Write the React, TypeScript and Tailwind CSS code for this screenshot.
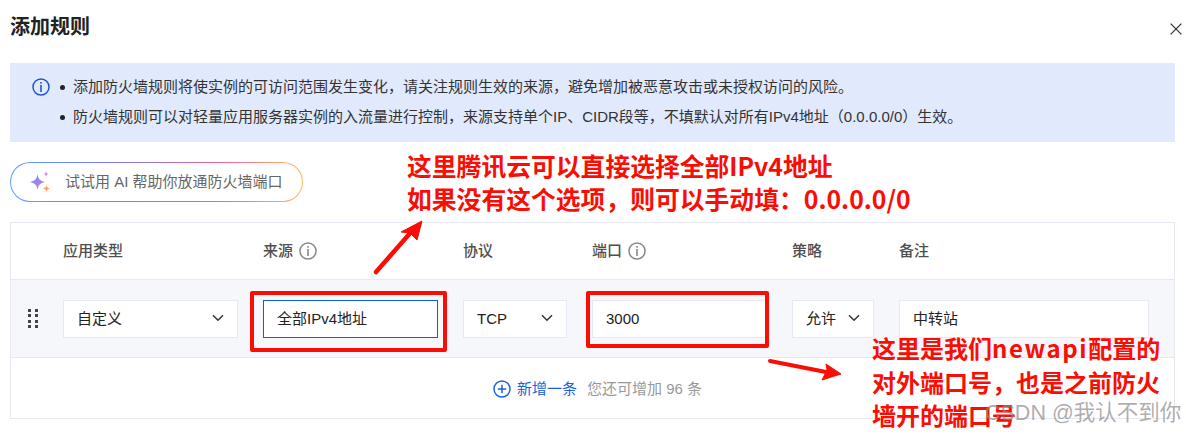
function Info({ className }: { className: string }) {
  return (
    <svg viewBox="0 0 18 18" className={className} fill="none" stroke="currentColor">
      <circle cx="9" cy="9" r="8" strokeWidth="1.5" />
      <rect x="8.2" y="4" width="1.6" height="1.7" fill="currentColor" stroke="none" />
      <rect x="8.2" y="7" width="1.6" height="7" fill="currentColor" stroke="none" />
    </svg>
  );
}

function Chevron() {
  return (
    <svg viewBox="0 0 12 8" className="-mt-[4px] h-2 w-3 text-[#333]" fill="none" stroke="currentColor" strokeWidth="1.5">
      <path d="M1 1.2 L6 6.2 L11 1.2" />
    </svg>
  );
}

function Select({ label, className }: { label: string; className: string }) {
  return (
    <div className={`flex h-[38px] items-center justify-between border border-[#e6e9f2] bg-white pl-[13px] pr-[13px] pt-[2px] ${className}`}>
      <span>{label}</span>
      <Chevron />
    </div>
  );
}

function Head({ label, info, className }: { label: string; info?: boolean; className: string }) {
  return (
    <div className={`flex items-center gap-[6px] ${className}`}>
      <span>{label}</span>
      {info && <Info className="h-[18px] w-[18px] text-[#888]" />}
    </div>
  );
}

export default function App() {
  return (
    <div className="relative h-[434px] w-[1186px] overflow-hidden bg-white font-['Liberation_Sans','Noto_Sans_CJK_SC',sans-serif] text-[#222]">
      <div className="relative px-[10px]">
        <h1 className="h-[63px] pt-[13px] text-[20px] font-bold leading-[28px] text-[#222]">添加规则</h1>
        <svg viewBox="0 0 12 12" className="absolute right-[4px] top-[23px] h-3 w-3 text-[#333]" fill="none" stroke="currentColor" strokeWidth="1.3">
          <path d="M0.6 0.6 L11.4 11.4 M11.4 0.6 L0.6 11.4" />
        </svg>

        <div className="flex h-[79px] w-[1165px] gap-[10px] bg-[#e1e9fd] pl-[22px] pt-[15px] text-[15px] leading-[30px] text-[#333]">
          <Info className="h-[18px] w-[18px] shrink-0 text-[#1f55d0]" />
          <ul className="-mt-[6px]">
            <li className="flex items-center gap-[8px]">
              <span className="h-[5px] w-[5px] rounded-full bg-[#222]" />
              <span>添加防火墙规则将使实例的可访问范围发生变化，请关注规则生效的来源，避免增加被恶意攻击或未授权访问的风险。</span>
            </li>
            <li className="flex items-center gap-[8px]">
              <span className="h-[5px] w-[5px] rounded-full bg-[#222]" />
              <span>防火墙规则可以对轻量应用服务器实例的入流量进行控制，来源支持单个IP、CIDR段等，不填默认对所有IPv4地址（0.0.0.0/0）生效。</span>
            </li>
          </ul>
        </div>

        <div className="mt-[20px] h-[40px] w-[293px] rounded-[20px] bg-[linear-gradient(90deg,#5aa0ff_0%,#7f7cf5_35%,#e9659f_72%,#ffb95a_100%)] p-px">
          <div className="flex h-full items-center gap-[13px] rounded-[19px] bg-white pl-[17px] text-[15px] text-[#666]">
            <svg viewBox="0 0 24 24" className="h-[24px] w-[24px]">
              <defs>
                <linearGradient id="spark" x1="0" y1="0" x2="1" y2="1">
                  <stop offset="0" stopColor="#6f8dff" />
                  <stop offset="1" stopColor="#c77bf0" />
                </linearGradient>
              </defs>
              <path d="M9.5 4 C10.3 9 12 11 17 12 C12 13 10.3 15 9.5 20 C8.7 15 7 13 2 12 C7 11 8.7 9 9.5 4 Z" fill="url(#spark)" />
              <path d="M18 1 C18.3 3 19 3.7 21 4 C19 4.3 18.3 5 18 7 C17.7 5 17 4.3 15 4 C17 3.7 17.7 3 18 1 Z" fill="#c98af0" />
              <path d="M18.5 15 C18.9 17.2 19.8 18.1 22 18.5 C19.8 18.9 18.9 19.8 18.5 22 C18.1 19.8 17.2 18.9 15 18.5 C17.2 18.1 18.1 17.2 18.5 15 Z" fill="#f8a05a" />
            </svg>
            <span>试试用 AI 帮助你放通防火墙端口</span>
          </div>
        </div>

        <div className="mt-[20px] h-[197px] w-[1165px] border border-[#e6e9f2] text-[15px]">
          <div className="flex h-[56px] items-center gap-[25px] pl-[52px] font-medium text-[#4f4f4f]">
            <Head label="应用类型" className="w-[175px]" />
            <Head label="来源" info className="w-[175px]" />
            <Head label="协议" className="w-[104px]" />
            <Head label="端口" info className="w-[175px]" />
            <Head label="策略" className="w-[82px]" />
            <Head label="备注" className="w-[250px]" />
          </div>
          <div className="flex h-[79px] items-center gap-[25px] border-y border-[#e6e9f2] bg-[#f6f7fb] pl-[17px]">
            <div className="grid w-[10px] grid-cols-2 gap-x-[4px] gap-y-[2.5px]">
              {[0, 1, 2, 3, 4, 5, 6, 7].map((i) => (
                <span key={i} className="h-[3px] w-[3px] bg-[#444]" />
              ))}
            </div>
            <Select label="自定义" className="w-[175px]" />
            <div className="flex h-[38px] w-[175px] items-center border border-[#0b5fd8] bg-white pl-[13px] pt-[2px]">全部IPv4地址</div>
            <Select label="TCP" className="w-[104px]" />
            <div className="flex h-[38px] w-[175px] items-center border border-[#e6e9f2] bg-white pl-[13px] pt-[2px]">3000</div>
            <Select label="允许" className="w-[82px]" />
            <div className="flex h-[38px] w-[250px] items-center border border-[#e6e9f2] bg-white pl-[13px] pt-[2px]">中转站</div>
          </div>
          <div className="flex h-[60px] items-center justify-center pl-[10px] pt-[2px]">
            <svg viewBox="0 0 18 18" className="mr-[6px] h-[18px] w-[18px] text-[#1c62d9]" fill="none" stroke="currentColor" strokeWidth="1.5">
              <circle cx="9" cy="9" r="8" />
              <path d="M9 4.8 V13.2 M4.8 9 H13.2" />
            </svg>
            <span className="text-[#1c62d9]">新增一条</span>
            <span className="ml-[10px] text-[#999]">您还可增加 96 条</span>
          </div>
        </div>
      </div>

      {/* Red markup laid over the screenshot */}
      <div className="absolute left-[250px] top-[291px] h-[61px] w-[197px] rounded-[2px] border-[4px] border-[#fa0d05]" />
      <div className="absolute left-[586px] top-[291px] h-[57px] w-[183px] rounded-[2px] border-[4px] border-[#fa0d05]" />
      <svg className="absolute left-0 top-0 h-[434px] w-[1186px]" viewBox="0 0 1186 434" fill="none">
        <path d="M376 272 L412 231" stroke="#fa0d05" strokeWidth="4.5" strokeLinecap="round" />
        <path d="M422 221 L401 232 L410 233 L417 240 Z" fill="#fa0d05" stroke="#fa0d05" />
        <path d="M770 361 L826 372" stroke="#fa0d05" strokeWidth="4" strokeLinecap="round" />
        <path d="M841 374 L826 364 L827 370 L822 380 Z" fill="#fa0d05" stroke="#fa0d05" />
      </svg>
      <div className="absolute left-[407px] top-[149px] text-[24.8px] font-bold leading-[33px] text-[#fa0d05] [font-family:'Noto_Sans_CJK_SC',sans-serif]">
        <p>这里腾讯云可以直接选择全部IPv4地址</p>
        <p>如果没有这个选项，则可以手动填：0.0.0.0/0</p>
      </div>
      <div className="absolute left-[872px] top-[331px] text-[24px] font-bold leading-[33.5px] text-[#fa0d05] [font-family:'Noto_Sans_CJK_SC',sans-serif]">
        <p>这里是我们<span className="tracking-[1.6px]">newapi</span>配置的</p>
        <p>对外端口号，也是之前防火</p>
        <p>墙开的端口号</p>
      </div>
      <div className="absolute left-[985px] top-[399px] text-[21.5px] leading-[28px] text-[#8a8a8a]/70">CSDN @我认不到你</div>
    </div>
  );
}
